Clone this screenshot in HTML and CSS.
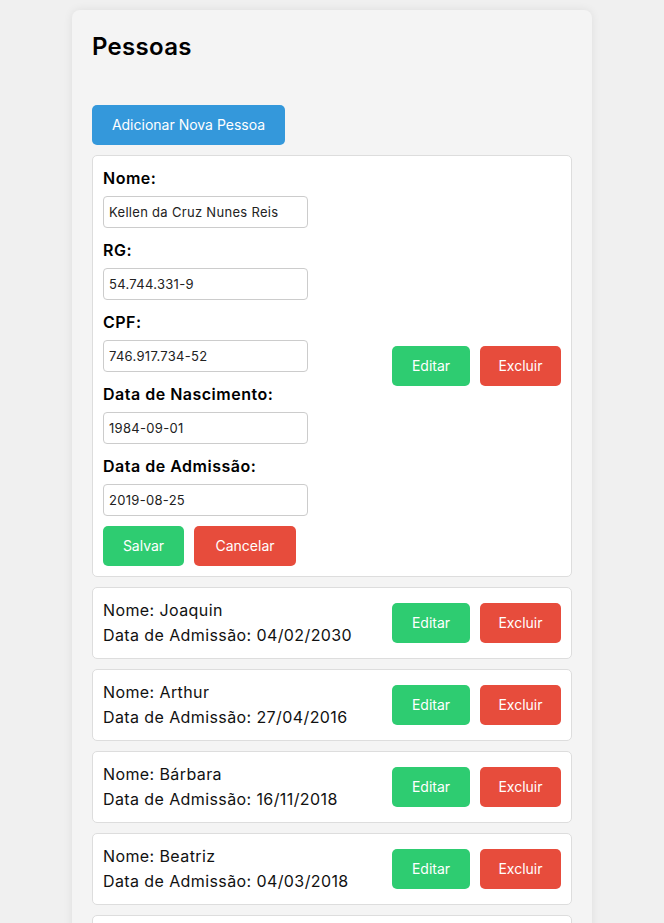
FILE: index.html
```html
<!DOCTYPE html>
<html lang="pt-BR">
<head>
<meta charset="utf-8">
<title>Pessoas</title>
<link rel="stylesheet" href="styles.css">
</head>
<body>
<div class="container">
  <h1 class="title">Pessoas</h1>
  <button class="btn btn-add">Adicionar Nova Pessoa</button>
  <div class="list">
    <div class="card">
      <form class="form">
        <label class="label">Nome:</label>
        <input class="input" type="text" value="Kellen da Cruz Nunes Reis">
        <label class="label">RG:</label>
        <input class="input" type="text" value="54.744.331-9">
        <label class="label">CPF:</label>
        <input class="input" type="text" value="746.917.734-52">
        <label class="label">Data de Nascimento:</label>
        <input class="input" type="text" value="1984-09-01">
        <label class="label">Data de Admissão:</label>
        <input class="input" type="text" value="2019-08-25">
        <div class="form-actions">
          <button type="button" class="btn btn-green btn-save">Salvar</button>
          <button type="button" class="btn btn-red btn-cancel">Cancelar</button>
        </div>
      </form>
      <div class="actions">
        <button class="btn btn-green btn-edit">Editar</button>
        <button class="btn btn-red btn-del">Excluir</button>
      </div>
    </div>
    <div class="card">
      <div class="info"><div>Nome: Joaquin</div><div>Data de Admissão: 04/02/2030</div></div>
      <div class="actions">
        <button class="btn btn-green btn-edit">Editar</button>
        <button class="btn btn-red btn-del">Excluir</button>
      </div>
    </div>
    <div class="card">
      <div class="info"><div>Nome: Arthur</div><div>Data de Admissão: 27/04/2016</div></div>
      <div class="actions">
        <button class="btn btn-green btn-edit">Editar</button>
        <button class="btn btn-red btn-del">Excluir</button>
      </div>
    </div>
    <div class="card">
      <div class="info"><div>Nome: Bárbara</div><div>Data de Admissão: 16/11/2018</div></div>
      <div class="actions">
        <button class="btn btn-green btn-edit">Editar</button>
        <button class="btn btn-red btn-del">Excluir</button>
      </div>
    </div>
    <div class="card">
      <div class="info"><div>Nome: Beatriz</div><div>Data de Admissão: 04/03/2018</div></div>
      <div class="actions">
        <button class="btn btn-green btn-edit">Editar</button>
        <button class="btn btn-red btn-del">Excluir</button>
      </div>
    </div>
    <div class="card card-last"></div>
  </div>
</div>
</body>
</html>
```
FILE: styles.css
```css
* { box-sizing: border-box; }
html, body { margin: 0; padding: 0; }
body {
  background: #f0f0f0;
  font-family: Inter, "Open Sans", sans-serif;
  color: #111;
  line-height: 25px;
  font-size: 16px;
}
.container {
  width: 520px;
  margin: 10px auto 0;
  padding: 20px;
  background: #f4f4f4;
  border-radius: 8px;
  box-shadow: 0 0 10px rgba(0, 0, 0, 0.08);
}
.title {
  margin: 0 0 41px;
  font-size: 24px;
  line-height: 34px;
  font-weight: 600;
  color: #000;
  letter-spacing: 0.3px;
}
.btn {
  border: none;
  border-radius: 5px;
  color: #fff;
  font-family: inherit;
  font-size: 14px;
  line-height: 20px;
  padding: 10px 0;
  cursor: pointer;
}
.btn-add { background: #3498db; width: 193px; margin-bottom: 10px; display: block; }
.btn-green { background: #2ecc71; }
.btn-red { background: #e74c3c; }
.btn-edit { width: 78px; }
.btn-del { width: 81px; }
.btn-save { width: 81px; }
.btn-cancel { width: 102px; }
.list { display: flex; flex-direction: column; gap: 10px; }
.card {
  background: #fff;
  border: 1px solid #ddd;
  border-radius: 5px;
  padding: 10px;
  display: flex;
  justify-content: space-between;
  align-items: center;
}
.card-last { height: 72px; }
.form { display: flex; flex-direction: column; width: 205px; }
.label {
  font-weight: 600;
  color: #000;
  margin-bottom: 5px;
  letter-spacing: 0.5px;
  white-space: nowrap;
}
.input {
  width: 205px;
  height: 32px;
  border: 1px solid #ccc;
  border-radius: 4px;
  padding: 0 5px;
  font-family: inherit;
  font-size: 13px;
  letter-spacing: 0.3px;
  color: #222;
  margin-bottom: 10px;
  background: #fff;
}
.form-actions { display: flex; gap: 10px; }
.actions { display: flex; gap: 10px; }
.info { color: #111; letter-spacing: 0.4px; }
```
